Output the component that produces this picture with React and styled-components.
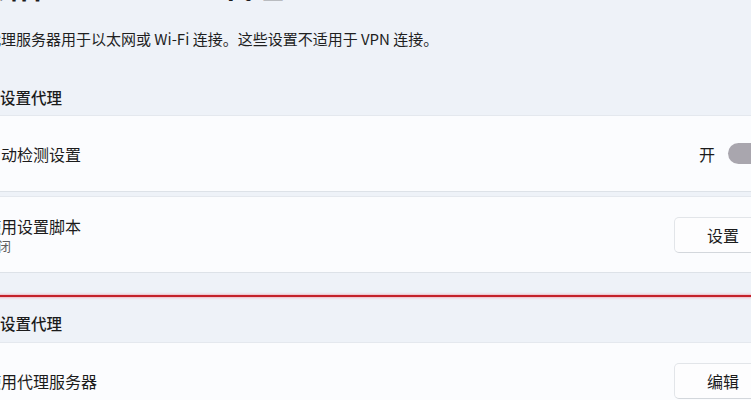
import React from 'react'
import styled, { createGlobalStyle } from 'styled-components'

const GlobalStyle = createGlobalStyle`
  html, body {
    margin: 0;
    padding: 0;
    background: #eef2f8;
    overflow: hidden;
  }
  body {
    font-family: "Noto Sans CJK SC", "Noto Sans", sans-serif;
    color: #1b1b1b;
  }
`

const Page = styled.div`
  width: 819px;
  margin-left: -31px;
  display: flex;
  flex-direction: column;
`

const Title = styled.h1`
  margin: -34px 0 0 0;
  font-size: 30px;
  line-height: 38px;
  font-weight: 600;
  white-space: nowrap;
`

const Description = styled.p`
  margin: 24px 0 0 2px;
  font-size: 15px;
  line-height: 22px;
  color: #1f1f1f;
  white-space: nowrap;
`

const SectionHeader = styled.h2`
  margin: ${p => p.$top}px 0 ${p => p.$bottom}px 0;
  font-size: 15.5px;
  line-height: 22px;
  font-weight: 500;
  color: #1b1b1b;
`

const CardList = styled.div`
  display: flex;
  flex-direction: column;
  gap: 4px;
`

const Card = styled.div`
  height: 77px;
  box-sizing: border-box;
  padding: 0 15px;
  display: flex;
  align-items: center;
  justify-content: space-between;
  background: #fbfcfe;
  border: 1px solid #e4e8ee;
  border-bottom-color: #dde2e8;
  border-radius: 6px;
`

const Labels = styled.div`
  display: flex;
  flex-direction: column;
  gap: 1px;
`

const Label = styled.span`
  font-size: 16px;
  line-height: 20px;
  color: #1b1b1b;
`

const SubLabel = styled.span`
  font-size: 13px;
  line-height: 17px;
  color: #5f5f5f;
`

const Controls = styled.div`
  display: flex;
  align-items: center;
  gap: 13px;
`

const ToggleText = styled.span`
  font-size: 16px;
  color: #1b1b1b;
`

const Toggle = styled.div`
  width: 44px;
  height: 21px;
  border-radius: 11px;
  background: #a9a6ae;
  position: relative;
  &::after {
    content: "";
    position: absolute;
    top: 4px;
    right: 5px;
    width: 13px;
    height: 13px;
    border-radius: 50%;
    background: #ffffff;
  }
`

const Button = styled.button`
  width: 98px;
  height: 36px;
  font-family: inherit;
  font-size: 16px;
  color: #1b1b1b;
  background: #fdfdfe;
  border: 1px solid #e2e5e9;
  border-bottom-color: #d3d7dc;
  border-radius: 5px;
`

const RedLine = styled.div`
  height: 2px;
  margin-top: 22px;
  background: #c4222a;
  box-shadow: 0 0 2px 1px rgba(240, 120, 140, 0.45);
`

export default function App() {
  return (
    <>
      <GlobalStyle />
      <Page>
        <Title>网络和 Internet&nbsp;&nbsp;›&nbsp;&nbsp;代理</Title>
        <Description>
          将代理服务器用于以太网或 Wi-Fi 连接。这些设置不适用于 VPN 连接。
        </Description>

        <SectionHeader $top={36} $bottom={7}>自动设置代理</SectionHeader>
        <CardList>
          <Card>
            <Label>自动检测设置</Label>
            <Controls>
              <ToggleText>开</ToggleText>
              <Toggle />
            </Controls>
          </Card>
          <Card>
            <Labels>
              <Label>使用设置脚本</Label>
              <SubLabel>关闭</SubLabel>
            </Labels>
            <Button>设置</Button>
          </Card>
        </CardList>

        <RedLine />

        <SectionHeader $top={15} $bottom={8}>手动设置代理</SectionHeader>
        <CardList>
          <Card>
            <Label>使用代理服务器</Label>
            <Button>编辑</Button>
          </Card>
        </CardList>
      </Page>
    </>
  )
}
